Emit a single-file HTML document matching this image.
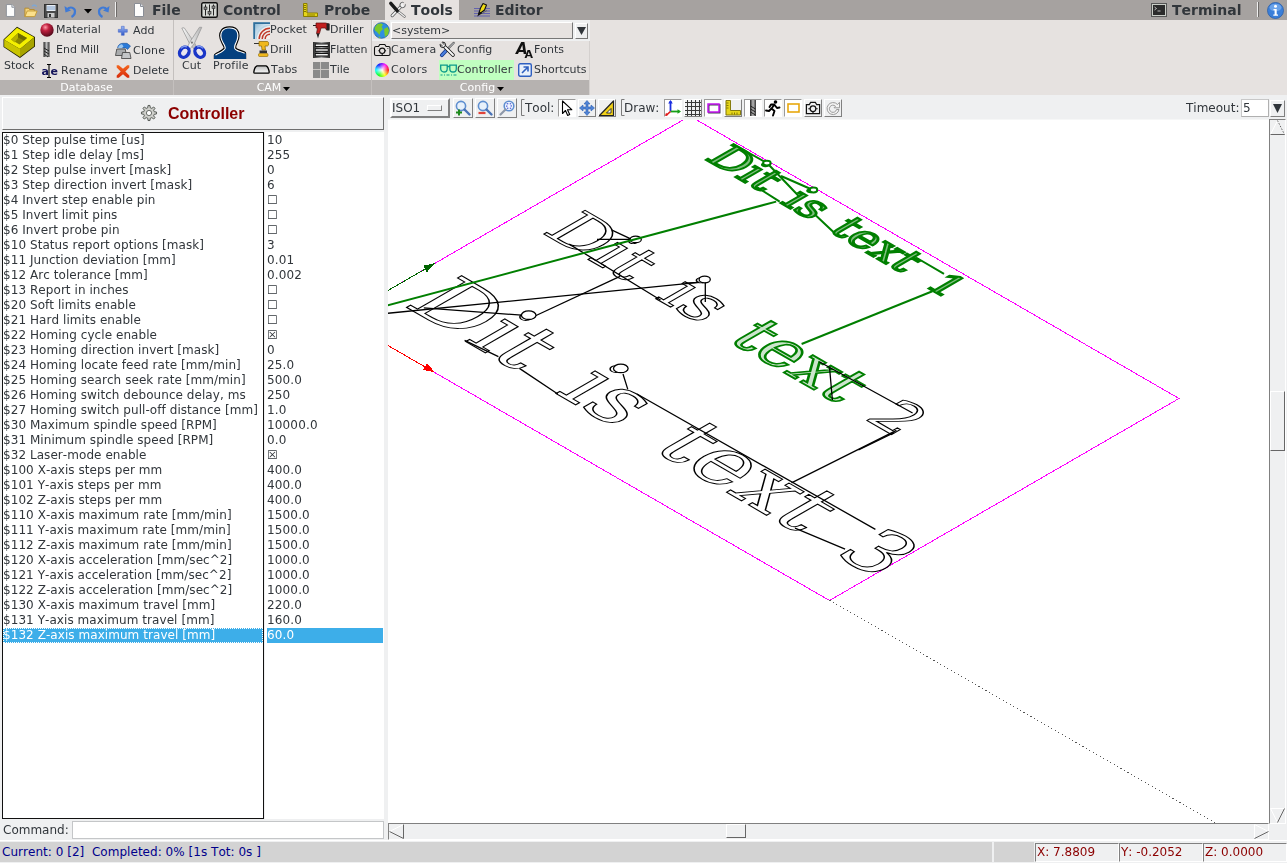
<!DOCTYPE html>
<html>
<head>
<meta charset="utf-8">
<title>bCNC</title>
<style>
html,body{margin:0;padding:0;}
body{filter:brightness(1);width:1287px;height:863px;overflow:hidden;background:#eff0f1;position:relative;
 font-family:"DejaVu Sans","Liberation Sans",sans-serif;font-size:12px;color:#31363b;font-kerning:none;}
.abs{position:absolute;}
#tabbar{position:absolute;left:0;top:0;width:1287px;height:20px;}
#ribbon{position:absolute;left:0;top:20px;width:1287px;height:75px;}
.tab{position:absolute;top:0;height:20px;font-weight:bold;font-size:14px;line-height:20px;color:#31363b;white-space:nowrap;}
.tab.active{background:#e6e2e0;}
.glbg{position:absolute;top:60px;height:15px;background:#b6b2b0;opacity:.999}
.glabel{position:absolute;top:60px;height:15px;color:#fff;font-size:11px;line-height:16px;text-align:center;white-space:nowrap;}
.rb{position:absolute;font-size:11px;line-height:13px;white-space:nowrap;color:#31363b;}
.sep{position:absolute;top:0;width:1px;height:75px;background:#d9d6d3;}
.row{position:absolute;left:0;height:15px;line-height:15px;white-space:nowrap;letter-spacing:.06px;margin-top:1px}
.row.v{letter-spacing:.15px}
.t12{font-size:12px;white-space:nowrap;position:absolute;}
svg{position:absolute;overflow:visible;}
.gl{display:inline-block}
</style>
</head>
<body>
<div class="abs" style="left:0;top:0;width:1287px;height:20px;opacity:.999;background:#a6a2a0"></div>
<div class="abs" style="left:0;top:20px;width:1287px;height:75px;opacity:.999;background:#e6e2e0"></div>
<!-- TABBAR -->
<div id="tabbar">
<!-- quick icons -->
<svg style="left:5px;top:3px" width="11" height="15" viewBox="0 0 12 16"><path d="M1.5 1.5h6l3 3v10h-9z" fill="#fdfdfd" stroke="#8a8e96" stroke-width="1"/><path d="M7.5 1.5v3h3" fill="#dfe3ea" stroke="#8a8e96" stroke-width="1"/></svg>
<svg style="left:23px;top:3px" width="16" height="15" viewBox="0 0 16 16"><path d="M1.5 14.5v-9h4l1 1.5h5v2" fill="#f3d27a" stroke="#b58a2a"/><path d="M1.5 14.5l2.5-6h10.5l-2.5 6z" fill="#fbe08c" stroke="#c39a35"/><path d="M9 3.5c2-2 4-1.5 5 0.5" fill="none" stroke="#7aa7d8" stroke-width="1.2"/></svg>
<svg style="left:44px;top:4px" width="14" height="14" viewBox="0 0 14 14"><rect x="0.5" y="0.5" width="13" height="13" fill="#4a4a4a" stroke="#333"/><rect x="2.5" y="1" width="9" height="6" fill="#e9eef5"/><path d="M3 3h8M3 5h8" stroke="#7f9fc8" stroke-width="1"/><rect x="3.5" y="9" width="7" height="4.5" fill="#c9c9c9"/><rect x="5" y="10" width="2" height="3" fill="#333"/></svg>
<svg style="left:64px;top:4px" width="13" height="14" viewBox="0 0 13 14"><path d="M3 5.5c3-3.5 8-2 8 2 0 2.5-1.5 4.5-3.5 5.5" fill="none" stroke="#3f7ad6" stroke-width="2.2"/><path d="M0.5 2l1 6.5 5.5-2z" fill="#3f7ad6"/></svg>
<svg style="left:84px;top:9px" width="8" height="5" viewBox="0 0 8 5"><path d="M0 0h8l-4 4.5z" fill="#000"/></svg>
<svg style="left:97px;top:4px" width="13" height="14" viewBox="0 0 13 14"><path d="M10 5.5c-3-3.5-8-2-8 2 0 2.5 1.5 4.5 3.5 5.5" fill="none" stroke="#3f7ad6" stroke-width="2.2"/><path d="M12.500 2l-1 6.500-5.500-2z" fill="#3f7ad6"/></svg>
<div class="abs" style="left:115px;top:2px;width:1px;height:15px;background:#efefef"></div>
<div class="abs" style="left:116px;top:2px;width:1px;height:15px;background:#6e6b69"></div>
<!-- File -->
<svg style="left:133px;top:3px" width="12" height="14" viewBox="0 0 12 14"><path d="M1.500 0.500h6l3 3v10h-9z" fill="#fdfdfd" stroke="#8a8e96"/><path d="M7.500 0.500v3h3" fill="#dfe3ea" stroke="#8a8e96"/></svg>
<div class="tab" style="left:152px">File</div>
<!-- Control -->
<svg style="left:201px;top:2px" width="17" height="16" viewBox="0 0 17 16"><rect x="0.7" y="0.7" width="15.600" height="14.600" rx="1.500" fill="#d8dad6" stroke="#111" stroke-width="1.400"/><path d="M4.500 2.500v11M8.500 2.500v11M12.500 2.500v11" stroke="#222" stroke-width="1"/><rect x="3" y="5" width="3" height="2.500" fill="#888" stroke="#222" stroke-width=".6"/><rect x="7" y="9.500" width="3" height="2.500" fill="#888" stroke="#222" stroke-width=".6"/><rect x="11" y="4" width="3" height="2.500" fill="#888" stroke="#222" stroke-width=".6"/></svg>
<div class="tab" style="left:223px">Control</div>
<!-- Probe -->
<svg style="left:303px;top:3px" width="15" height="14" viewBox="0 0 15 14"><path d="M0.500 0.500h3.500v9.500h10.500v3.500h-14z" fill="#e6d619" stroke="#8a7d00"/><path d="M1 2.500h2M1 4.500h2M1 6.500h2M1 8.500h2M5 11v2M7 11v2M9 11v2M11 11v2" stroke="#6b6000" stroke-width=".8"/></svg>
<div class="tab" style="left:324px">Probe</div>
<!-- Tools (active) -->
<div class="tab active" style="left:385px;width:74px"></div>
<svg style="left:389px;top:2px" width="18" height="16" viewBox="0 0 18 16"><path d="M13 3.500L3.200 13.600" stroke="#555" stroke-width="3.200" stroke-linecap="round"/><path d="M13 3.500L3.200 13.600" stroke="#f4f4f4" stroke-width="1.700" stroke-linecap="round"/><circle cx="13.600" cy="3" r="2.700" fill="#f4f4f4" stroke="#555" stroke-width=".9"/><path d="M14 2.600L17.500 -0.500" stroke="#e6e2e0" stroke-width="2.300"/><path d="M8.500 9L15.500 14.500" stroke="#666" stroke-width="2.400" stroke-linecap="round"/><path d="M8.500 9L15.500 14.500" stroke="#f2f2f2" stroke-width="1.100" stroke-linecap="round"/><path d="M1.800 1.300L8.300 8.800" stroke="#1a1a1a" stroke-width="3.400" stroke-linecap="round"/></svg>
<div class="tab" style="left:411px">Tools</div>
<!-- Editor -->
<svg style="left:474px;top:2px" width="17" height="16" viewBox="0 0 17 16"><path d="M0 6.500h16M0 9h16M0 11.500h16M0 14h16" stroke="#5a5ab0" stroke-width=".9"/><path d="M4.500 12.500L6.500 6 9 1.500 12.500 3 10.500 8z" fill="#f0dc14" stroke="#111" stroke-width="1.100" stroke-linejoin="round"/><path d="M3.200 14.500L5.200 9.500 8.500 11z" fill="#111"/><path d="M8 11.500l5-3" stroke="#666" stroke-width="1"/></svg>
<div class="tab" style="left:495px">Editor</div>
<!-- Terminal -->
<svg style="left:1151px;top:3px" width="16" height="14" viewBox="0 0 16 14"><rect x="0.500" y="0.500" width="15" height="13" fill="#c9cdc6" stroke="#555"/><rect x="2" y="2" width="12" height="10" fill="#2b2b2b"/><path d="M3.500 4l2 1.500-2 1.500M6.500 8h3" stroke="#ddd" stroke-width=".8" fill="none"/></svg>
<div class="tab" style="left:1172px">Terminal</div>
<div class="abs" style="left:1257px;top:2px;width:1px;height:15px;background:#efefef"></div>
<div class="abs" style="left:1258px;top:2px;width:1px;height:15px;background:#6e6b69"></div>
<svg style="left:1267px;top:2px" width="17" height="17" viewBox="0 0 17 17"><circle cx="8.500" cy="8.500" r="8" fill="#3b7fd9" stroke="#2a5ea8" stroke-width=".8"/><ellipse cx="8.500" cy="5.500" rx="6" ry="3.800" fill="#7fb0ee" opacity=".7"/><circle cx="8.500" cy="4.300" r="1.500" fill="#fff"/><path d="M6.500 7h3.200v5.500h1.300v1.200h-4.700v-1.200h1.300v-4.300h-1.100z" fill="#fff"/></svg>
</div>
<!-- RIBBON -->
<div id="ribbon">
<div class="glbg" style="left:0;width:173px"></div><div class="glabel" style="left:0;width:173px"><span class="gl">Database</span></div>
<div class="glbg" style="left:174px;width:197px"></div><div class="glabel" style="left:174px;width:197px"><span class="gl">CAM</span><svg style="position:relative;left:2px;top:0px" width="7" height="4" viewBox="0 0 7 4"><path d="M0 0h7l-3.500 4z" fill="#000"/></svg></div>
<div class="glbg" style="left:372px;width:218px"></div><div class="glabel" style="left:372px;width:218px"><span class="gl">Config</span><svg style="position:relative;left:2px;top:0px" width="7" height="4" viewBox="0 0 7 4"><path d="M0 0h7l-3.500 4z" fill="#000"/></svg></div>
<div class="abs" style="left:173px;top:0;width:1px;height:75px;background:#c4c0be"></div>
<div class="abs" style="left:371px;top:0;width:1px;height:75px;background:#c4c0be"></div>
<div class="abs" style="left:589px;top:0;width:1px;height:75px;background:#d4d0ce"></div>
<svg style="left:3px;top:6px" width="33" height="33" viewBox="0 0 33 33"><path d="M0.500 13.500L14 0.800 32 11v9.500L17 32 0.500 21z" fill="#1a1a00"/><path d="M1.200 13.800L14 1.800 31.200 11.300 17 23z" fill="#f4f000"/><path d="M1.200 13.800L17 23v8L1.200 20.700z" fill="#c9c400"/><path d="M17 23l14.200-11.700v9L17 31z" fill="#a8a400"/><path d="M8 13.500l7-6.500 9 5-7.500 6.500z" fill="#8c8800"/><path d="M15 7l9 5-3 2.600-6-3.200z" fill="#6d6a00"/><path d="M15 7v5l-3.500 4.500L8 13.500z" fill="#b5b000"/></svg>
<div class="rb" style="left:4px;top:39px;">Stock</div>
<svg style="left:40px;top:3px" width="14" height="14" viewBox="0 0 14 14"><defs><radialGradient id="gm" cx=".38" cy=".3" r=".75"><stop offset="0" stop-color="#ff9aa8"/><stop offset=".35" stop-color="#c0203f"/><stop offset="1" stop-color="#4a0818"/></radialGradient></defs><circle cx="7" cy="7" r="6.700" fill="url(#gm)"/></svg>
<div class="rb" style="left:56px;top:3px;">Material</div>
<svg style="left:43px;top:22px" width="7" height="15" viewBox="0 0 7 15"><defs><linearGradient id="ge" x1="0" x2="1"><stop offset="0" stop-color="#222"/><stop offset=".5" stop-color="#bbb"/><stop offset="1" stop-color="#333"/></linearGradient></defs><rect x="0.500" y="0" width="6" height="15" fill="url(#ge)"/><path d="M1 6l5 3M1 9l5 3M1 12l4 3" stroke="#222" stroke-width="1"/></svg>
<div class="rb" style="left:56px;top:23px;">End Mill</div>
<svg style="left:41px;top:43px" width="18" height="16" viewBox="0 0 18 16"><text x="0.500" y="12" font-family="DejaVu Sans" font-weight="bold" font-size="11" fill="#14145a">a</text><text x="9.500" y="12" font-family="DejaVu Sans" font-weight="bold" font-size="11" fill="#14145a">e</text><path d="M6 1.500h4M6 14.500h4M8 1.500v13" stroke="#000" stroke-width="1.100"/></svg>
<div class="rb" style="left:61px;top:44px;letter-spacing:0.18px">Rename</div>
<svg style="left:118px;top:6px" width="10" height="10" viewBox="0 0 10 10"><defs><linearGradient id="ga" x1="0" y1="0" x2="0" y2="1"><stop offset="0" stop-color="#9db8f4"/><stop offset="1" stop-color="#2f57c8"/></linearGradient></defs><path d="M3.400 0.300h2.800v3.100h3.100v2.800h-3.100v3.100h-2.800v-3.100h-3.100v-2.800h3.100z" fill="url(#ga)" stroke="#3a5fc4" stroke-width=".5"/></svg>
<div class="rb" style="left:133px;top:4px;">Add</div>
<svg style="left:115px;top:23px" width="17" height="16" viewBox="0 0 17 16"><path d="M2.500 4.500C3.500 1.500 5.500 0.300 8 0.300h4l3.500 2.700-3 3.500-1.500-1.500H7z" fill="#2a7ad8" stroke="#1d4f96" stroke-width=".6"/><path d="M3 4.500c.8-2 2.200-3 4-3.200l1.500 2.200-2.500 2.500z" fill="#9cc6ee"/><path d="M1.800 6h8.400l1.300 6.500H0.500z" fill="#a9abad" stroke="#3c3c3c" stroke-width=".8"/><path d="M7.500 9.500h7.300l1.200 6H6.500z" fill="#c4c6c8" stroke="#3c3c3c" stroke-width=".8"/></svg>
<div class="rb" style="left:133px;top:24px;letter-spacing:0.2px">Clone</div>
<svg style="left:116px;top:45px" width="14" height="13" viewBox="0 0 14 13"><defs><linearGradient id="gd" x1="0" y1="0" x2="0" y2="1"><stop offset="0" stop-color="#f4661e"/><stop offset="1" stop-color="#d82a0a"/></linearGradient></defs><path d="M2.800 0.300L7 3.800 11.200 0.300 13.300 0.300 13.300 2.600 9.300 6.500 13.300 10.400 13.300 12.700 11.200 12.700 7 9.200 2.800 12.700 0.700 12.700 0.700 10.400 4.700 6.500 0.700 2.600 0.700 0.300z" fill="url(#gd)"/></svg>
<div class="rb" style="left:133px;top:44px;">Delete</div>
<svg style="left:178px;top:7px" width="28" height="32" viewBox="0 0 28 32"><defs><linearGradient id="gs1" x1="0" x2="1"><stop offset="0" stop-color="#fafafa"/><stop offset="1" stop-color="#b4b4b4"/></linearGradient></defs><path d="M3.800 1L6.200 0.800 16.400 15.500 19 21 16.500 22.500 11.500 16.500z" fill="url(#gs1)" stroke="#9a9a9a" stroke-width=".8"/><path d="M23.800 0.300L21.400 0.300 11.600 15.500 9 21 11.500 22.500 16.400 16.500z" fill="url(#gs1)" stroke="#9a9a9a" stroke-width=".8"/><circle cx="13.900" cy="15.600" r="1.100" fill="#777"/><ellipse cx="6.300" cy="25.200" rx="4.300" ry="5.400" fill="none" stroke="#1a36c8" stroke-width="3.500" transform="rotate(38 6.300 25.200)"/><ellipse cx="21.700" cy="25.200" rx="4.300" ry="5.400" fill="none" stroke="#1a36c8" stroke-width="3.500" transform="rotate(-38 21.700 25.200)"/><ellipse cx="6.300" cy="25.200" rx="2.400" ry="3.600" fill="#e9e6f0" transform="rotate(38 6.300 25.200)"/><ellipse cx="21.700" cy="25.200" rx="2.400" ry="3.600" fill="#e9e6f0" transform="rotate(-38 21.700 25.200)"/><path d="M3 21.500c1.500-2 4-2.500 6-1.500M19 20c2-1 4.500-.5 6 1.500" fill="none" stroke="#7f9cf0" stroke-width="1.200"/></svg>
<div class="rb" style="left:182px;top:39px;">Cut</div>
<svg style="left:213px;top:6px;overflow:hidden" width="34" height="33" viewBox="0 0 34 33"><path d="M3 34V29.500C6 27.500 10.500 26 12.500 23C13.500 21 11.500 18.500 10.500 16.500C8.500 13 7.500 8.500 9.500 5.500C11 3 14 2.500 16.600 2.500C19.500 2.500 22.500 3.300 23.600 6C25 9 24 13.500 22.500 16.500C21.500 18.500 20.500 21 21.500 23C23 25.500 28 26 31 27.500V34" fill="none" stroke="#000" stroke-width="4.400" stroke-linejoin="round"/><path d="M3 34V29.500C6 27.500 10.500 26 12.500 23C13.500 21 11.500 18.500 10.500 16.500C8.500 13 7.500 8.500 9.500 5.500C11 3 14 2.500 16.600 2.500C19.500 2.500 22.500 3.300 23.600 6C25 9 24 13.500 22.500 16.500C21.500 18.500 20.500 21 21.500 23C23 25.500 28 26 31 27.500V34" fill="none" stroke="#fff" stroke-width="2.200" stroke-linejoin="round"/><path d="M1 34V28.500L3 29.500V34zM33 34V27l-2 .5V34z" fill="#04407f"/><path d="M3 34V29.500C6 27.500 10.500 26 12.500 23C13.500 21 11.500 18.500 10.500 16.500C8.500 13 7.500 8.500 9.500 5.500C11 3 14 2.500 16.600 2.500C19.500 2.500 22.500 3.300 23.600 6C25 9 24 13.500 22.500 16.500C21.500 18.500 20.500 21 21.500 23C23 25.500 28 26 31 27.500V34Z" fill="#04407f"/></svg>
<div class="rb" style="left:213px;top:39px;letter-spacing:0.16px">Profile</div>
<svg style="left:253px;top:2px" width="17" height="17" viewBox="0 0 17 17"><defs><linearGradient id="gp" x1="0" y1="0" x2="1" y2="1"><stop offset="0" stop-color="#7fb0d0"/><stop offset=".6" stop-color="#eef4f8"/></linearGradient></defs><rect x="0.500" y="0.500" width="16.500" height="16.500" fill="url(#gp)"/><path d="M1.200 17V1.200H17" fill="none" stroke="#2f6f9c" stroke-width="1.800"/><path d="M3.200 17C3.200 9.400 9.400 3.200 17 3.200" fill="none" stroke="#b8d4e6" stroke-width="1.400"/><path d="M4.500 17C4.500 10 10 4.500 17 4.500V17z" fill="#f1eeec"/><path d="M6.200 17c0-5.900 4.800-10.700 10.800-10.700M9.200 17c0-4.300 3.500-7.800 7.800-7.800M12.200 17c0-2.700 2.100-4.800 4.800-4.800" fill="none" stroke="#c03a2a" stroke-width="1.500"/></svg>
<div class="rb" style="left:270px;top:3px;">Pocket</div>
<svg style="left:254px;top:21px" width="16" height="16" viewBox="0 0 16 16"><path d="M0 2.500h5" stroke="#333" stroke-width="1"/><path d="M5 0.500h8.500c1.500 0 1.500 4.500 0 4.500H11l.5 4h-3.500L7.500 5H5z" fill="#f0b81c" stroke="#8a6400" stroke-width=".7"/><rect x="5.500" y="9.500" width="7.500" height="2.500" fill="#333"/><rect x="4.500" y="12.500" width="9.500" height="3" rx="1" fill="#f0b81c" stroke="#8a6400" stroke-width=".6"/></svg>
<div class="rb" style="left:270px;top:23px;">Drill</div>
<svg style="left:253px;top:45px" width="17" height="9" viewBox="0 0 17 9"><defs><linearGradient id="gt" x1="0" y1="0" x2="0" y2="1"><stop offset="0" stop-color="#bdbdbd"/><stop offset="1" stop-color="#f8f8f8"/></linearGradient></defs><path d="M0.800 7.200C1.200 4 2 1.600 4 0.800h9c2 .8 2.800 3.200 3.200 6.400 0 .8-.4 1-1 1h-13.400c-.6 0-1-.2-1-1z" fill="url(#gt)" stroke="#000" stroke-width="1.300"/></svg>
<div class="rb" style="left:271px;top:43px;">Tabs</div>
<svg style="left:313px;top:2px" width="17" height="17" viewBox="0 0 17 17"><path d="M0 3.500h3" stroke="#222" stroke-width="1"/><path d="M3 1h9.500l3.500 1v5.500h-3L12.500 6H8l-1.500 5.500h-3L4.500 6H3z" fill="#c3201f" stroke="#5a0b0b" stroke-width=".7"/><rect x="13.500" y="1.500" width="3" height="7" fill="#222"/><path d="M3.500 11.500h3L5 16.500z" fill="#222"/></svg>
<div class="rb" style="left:330px;top:3px;">Driller</div>
<svg style="left:313px;top:22px" width="17" height="16" viewBox="0 0 17 16"><defs><linearGradient id="gf" x1="0" x2="1"><stop offset="0" stop-color="#2a2a2a"/><stop offset=".5" stop-color="#a8a8a8"/><stop offset="1" stop-color="#2a2a2a"/></linearGradient></defs><rect x="0" y="0" width="17" height="16" fill="url(#gf)"/><path d="M2 3.300h13.500M2 8h13.500M2 12.700h13.500" stroke="#111" stroke-width="3.400"/><path d="M2.800 3.300h12M2.800 8h12M2.800 12.700h12" stroke="#f0f0f0" stroke-width="1.500"/></svg>
<div class="rb" style="left:330px;top:23px;letter-spacing:-0.18px">Flatten</div>
<svg style="left:313px;top:42px" width="16" height="16" viewBox="0 0 16 16"><rect width="16" height="16" fill="#8a8a8a"/><path d="M7.500 0v16M0 7.500h16" stroke="#c9c6c3" stroke-width="1"/></svg>
<div class="rb" style="left:330px;top:43px;">Tile</div>
<div class="abs" style="opacity:.999;left:372px;top:0;width:218px;height:21px;background:#eff0f1"></div>
<div class="abs" style="left:373px;top:1px;width:17px;height:18px;background:#e6e2e0"></div>
<svg style="left:373px;top:2px" width="17" height="17" viewBox="0 0 17 17"><circle cx="8.500" cy="8.500" r="7.800" fill="#2f8fe0" stroke="#1e5fa8" stroke-width=".8"/><path d="M4 2.500c2-1.500 5-1.500 6 0L8.500 5l1.500 2-2.500 2.500-1 3.500-2.500-3L2 8.500 1.500 6z" fill="#7bc92b"/><path d="M11 7l3.500-2 1.500 3.500-1 4-3 2.500-.5-3.500z" fill="#7bc92b"/><path d="M5 14l3 1.800-1.500.5z" fill="#7bc92b"/></svg>
<div class="abs" style="opacity:.999;left:391px;top:2px;width:182px;height:17px;background:#e6e2e0;border-top:1px solid #fff;border-left:1px solid #fff;border-bottom:1px solid #777;border-right:1px solid #777;box-sizing:border-box"></div>
<div class="rb" style="left:392px;top:4px;">&lt;system&gt;</div>
<div class="abs" style="left:575px;top:3px;width:13px;height:16px;background:#eff0f1;border-top:1px solid #fff;border-left:1px solid #fff;border-bottom:1px solid #777;border-right:1px solid #777;box-sizing:border-box"></div>
<svg style="left:577px;top:7px" width="9" height="8" viewBox="0 0 9 8"><path d="M0 0h9l-4.500 8z" fill="#31363b"/></svg>
<svg style="left:374px;top:23px" width="17" height="14" viewBox="0 0 17 14"><path d="M2 3.500h2.500l1.300-2h5l1.300 2H14.500q1.500 0 1.500 1.500v6q0 1.500-1.500 1.500H2q-1.500 0-1.500-1.500v-6q0-1.500 1.500-1.500z" fill="none" stroke="#111" stroke-width="1.100"/><circle cx="8.200" cy="7.800" r="2.700" fill="none" stroke="#111" stroke-width="1.100"/><path d="M5.500 7.800h-1.200M10.900 7.800h1.200M8.200 10.500v2M13.500 5.500h.8" stroke="#111" stroke-width="1.100"/></svg>
<div class="rb" style="left:391px;top:23px;letter-spacing:0.4px">Camera</div>
<svg style="left:439px;top:21px" width="17" height="17" viewBox="0 0 17 17"><path d="M14.800 1.800L8 8.600" stroke="#5a5a5a" stroke-width="2.200" stroke-linecap="round"/><path d="M14.800 1.800L8 8.600" stroke="#cfd4da" stroke-width="1" stroke-linecap="round"/><path d="M7.600 9L2.800 14.200" stroke="#173a8a" stroke-width="3.800" stroke-linecap="round"/><path d="M7.600 9L2.800 14.200" stroke="#4a7fe0" stroke-width="2" stroke-linecap="round"/><path d="M4.500 4.500L14 14" stroke="#111" stroke-width="3.600" stroke-linecap="round"/><path d="M4.500 4.500L14 14" stroke="#fafafa" stroke-width="1.900" stroke-linecap="round"/><circle cx="3.800" cy="3.800" r="2.700" fill="#fafafa" stroke="#111" stroke-width="1"/><path d="M0.500 0.500L4 4" stroke="#e6e2e0" stroke-width="2.200"/><path d="M1.600 3.400L3.800 5.200M3.400 1.600L5.200 3.800" stroke="#111" stroke-width=".8"/></svg>
<div class="rb" style="left:457px;top:23px;">Config</div>
<svg style="left:516px;top:21px" width="18" height="18" viewBox="0 0 18 18"><text x="0" y="13" font-family="DejaVu Sans" font-weight="bold" font-style="italic" font-size="15" fill="#111">A</text><text x="8.500" y="16.500" font-family="DejaVu Sans" font-weight="bold" font-size="11" fill="#111">A</text></svg>
<div class="rb" style="left:534px;top:23px;">Fonts</div>
<div class="abs" style="left:375px;top:43px;width:14px;height:14px;border-radius:50%;background:radial-gradient(circle,#fff 0%,rgba(255,255,255,0) 70%),conic-gradient(from 90deg,#f00,#ff0,#0f0,#0ff,#00f,#f0f,#f00)"></div>
<div class="rb" style="left:391px;top:43px;letter-spacing:0.36px">Colors</div>
<div class="abs" style="opacity:.999;left:439px;top:40px;width:75px;height:20px;background:#c0ffc0"></div>
<svg style="left:440px;top:44px" width="17" height="12" viewBox="0 0 17 12"><path d="M0.700 1.200h6.500v3.500c0 2-1.500 3.300-3.200 3.300S0.700 6.700 0.700 4.700zM9.800 1.200h6.500v3.500c0 2-1.500 3.300-3.200 3.300s-3.300-1.300-3.300-3.300zM7.200 2.500h2.600" fill="none" stroke="#0a9a8a" stroke-width="1.300"/><path d="M0.500 11h2M4 11h1M6.500 11h3M11 11h1M13.500 11h3" stroke="#0a9a8a" stroke-width="1"/></svg>
<div class="rb" style="left:457px;top:43px;letter-spacing:0.1px">Controller</div>
<svg style="left:518px;top:43px" width="14" height="14" viewBox="0 0 14 14"><rect x="0.700" y="0.700" width="12.600" height="12.600" rx="1.500" fill="#e9f0fb" stroke="#2f5fc0" stroke-width="1.400"/><path d="M4 10L9.500 4.500M5.500 4h4.500v4.500" fill="none" stroke="#2f5fc0" stroke-width="1.600"/></svg>
<div class="rb" style="left:534px;top:43px;">Shortcuts</div>
</div>
<!-- LEFT PANEL -->
<div id="left">
<div class="abs" style="left:2px;top:97px;width:382px;height:33px;box-sizing:border-box;background:#eff0f1;border-top:1px solid #fff;border-left:1px solid #fff;border-bottom:1px solid #6e6e6e;border-right:1px solid #6e6e6e"></div>
<svg style="left:141px;top:105px" width="16" height="16" viewBox="0 0 16 16"><path d="M6.74 2.75L7.05 0.46L8.95 0.46L9.26 2.75L10.82 3.40L12.66 1.99L14.01 3.34L12.60 5.18L13.25 6.74L15.54 7.05L15.54 8.95L13.25 9.26L12.60 10.82L14.01 12.66L12.66 14.01L10.82 12.60L9.26 13.25L8.95 15.54L7.05 15.54L6.74 13.25L5.18 12.60L3.34 14.01L1.99 12.66L3.40 10.82L2.75 9.26L0.46 8.95L0.46 7.05L2.75 6.74L3.40 5.18L1.99 3.34L3.34 1.99L5.18 3.40Z" fill="#cfd0cc" stroke="#555a55" stroke-width="1"/><circle cx="8" cy="8" r="2.600" fill="#fff" stroke="#6a6e6a" stroke-width="1"/></svg>
<div class="abs" style="left:168px;top:105px;font-family:'Liberation Sans',sans-serif;font-weight:bold;font-size:16px;line-height:18px;color:#8b0000;white-space:nowrap">Controller</div>
<div class="abs" style="left:2px;top:132px;width:262px;height:687px;box-sizing:border-box;background:#fff;border:1px solid #111"></div>
<div class="abs" style="left:265px;top:132px;width:119px;height:687px;background:#fff"></div>
<div class="row" style="left:3px;top:132px;">$0 Step pulse time [us]</div><div class="row v" style="left:267px;top:132px;">10</div>
<div class="row" style="left:3px;top:147px;">$1 Step idle delay [ms]</div><div class="row v" style="left:267px;top:147px;">255</div>
<div class="row" style="left:3px;top:162px;">$2 Step pulse invert [mask]</div><div class="row v" style="left:267px;top:162px;">0</div>
<div class="row" style="left:3px;top:177px;">$3 Step direction invert [mask]</div><div class="row v" style="left:267px;top:177px;">6</div>
<div class="row" style="left:3px;top:192px;">$4 Invert step enable pin</div><div class="row v" style="left:267px;top:192px;">☐</div>
<div class="row" style="left:3px;top:207px;">$5 Invert limit pins</div><div class="row v" style="left:267px;top:207px;">☐</div>
<div class="row" style="left:3px;top:222px;">$6 Invert probe pin</div><div class="row v" style="left:267px;top:222px;">☐</div>
<div class="row" style="left:3px;top:237px;">$10 Status report options [mask]</div><div class="row v" style="left:267px;top:237px;">3</div>
<div class="row" style="left:3px;top:252px;">$11 Junction deviation [mm]</div><div class="row v" style="left:267px;top:252px;">0.01</div>
<div class="row" style="left:3px;top:267px;">$12 Arc tolerance [mm]</div><div class="row v" style="left:267px;top:267px;">0.002</div>
<div class="row" style="left:3px;top:282px;">$13 Report in inches</div><div class="row v" style="left:267px;top:282px;">☐</div>
<div class="row" style="left:3px;top:297px;">$20 Soft limits enable</div><div class="row v" style="left:267px;top:297px;">☐</div>
<div class="row" style="left:3px;top:312px;">$21 Hard limits enable</div><div class="row v" style="left:267px;top:312px;">☐</div>
<div class="row" style="left:3px;top:327px;">$22 Homing cycle enable</div><div class="row v" style="left:267px;top:327px;">☒</div>
<div class="row" style="left:3px;top:342px;">$23 Homing direction invert [mask]</div><div class="row v" style="left:267px;top:342px;">0</div>
<div class="row" style="left:3px;top:357px;">$24 Homing locate feed rate [mm/min]</div><div class="row v" style="left:267px;top:357px;">25.0</div>
<div class="row" style="left:3px;top:372px;">$25 Homing search seek rate [mm/min]</div><div class="row v" style="left:267px;top:372px;">500.0</div>
<div class="row" style="left:3px;top:387px;">$26 Homing switch debounce delay, ms</div><div class="row v" style="left:267px;top:387px;">250</div>
<div class="row" style="left:3px;top:402px;">$27 Homing switch pull-off distance [mm]</div><div class="row v" style="left:267px;top:402px;">1.0</div>
<div class="row" style="left:3px;top:417px;">$30 Maximum spindle speed [RPM]</div><div class="row v" style="left:267px;top:417px;">10000.0</div>
<div class="row" style="left:3px;top:432px;">$31 Minimum spindle speed [RPM]</div><div class="row v" style="left:267px;top:432px;">0.0</div>
<div class="row" style="left:3px;top:447px;">$32 Laser-mode enable</div><div class="row v" style="left:267px;top:447px;">☒</div>
<div class="row" style="left:3px;top:462px;">$100 X-axis steps per mm</div><div class="row v" style="left:267px;top:462px;">400.0</div>
<div class="row" style="left:3px;top:477px;">$101 Y-axis steps per mm</div><div class="row v" style="left:267px;top:477px;">400.0</div>
<div class="row" style="left:3px;top:492px;">$102 Z-axis steps per mm</div><div class="row v" style="left:267px;top:492px;">400.0</div>
<div class="row" style="left:3px;top:507px;">$110 X-axis maximum rate [mm/min]</div><div class="row v" style="left:267px;top:507px;">1500.0</div>
<div class="row" style="left:3px;top:522px;">$111 Y-axis maximum rate [mm/min]</div><div class="row v" style="left:267px;top:522px;">1500.0</div>
<div class="row" style="left:3px;top:537px;">$112 Z-axis maximum rate [mm/min]</div><div class="row v" style="left:267px;top:537px;">1500.0</div>
<div class="row" style="left:3px;top:552px;">$120 X-axis acceleration [mm/sec^2]</div><div class="row v" style="left:267px;top:552px;">1000.0</div>
<div class="row" style="left:3px;top:567px;">$121 Y-axis acceleration [mm/sec^2]</div><div class="row v" style="left:267px;top:567px;">1000.0</div>
<div class="row" style="left:3px;top:582px;">$122 Z-axis acceleration [mm/sec^2]</div><div class="row v" style="left:267px;top:582px;">1000.0</div>
<div class="row" style="left:3px;top:597px;">$130 X-axis maximum travel [mm]</div><div class="row v" style="left:267px;top:597px;">220.0</div>
<div class="row" style="left:3px;top:612px;">$131 Y-axis maximum travel [mm]</div><div class="row v" style="left:267px;top:612px;">160.0</div>
<div class="abs" style="left:3px;top:628px;width:260px;height:15px;background:#3daee9;box-sizing:border-box;border:1px dotted #fff"></div>
<div class="abs" style="left:267px;top:628px;width:116px;height:15px;background:#3daee9"></div>
<div class="row" style="left:3px;top:627px;color:#fff;">$132 Z-axis maximum travel [mm]</div><div class="row v" style="left:267px;top:627px;color:#fff;">60.0</div>
<div class="t12" style="left:3px;top:823px;line-height:15px">Command:</div>
<div class="abs" style="left:72px;top:821px;width:312px;height:18px;box-sizing:border-box;background:#fff;border:1px solid #c4c6c8"></div>
</div>
<!-- TOOLBAR -->
<div id="toolbar">
<div class="abs" style="left:390px;top:98px;width:60px;height:20px;box-sizing:border-box;background:#eff0f1;border-top:2px solid #fff;border-left:2px solid #fff;border-bottom:2px solid #808080;border-right:2px solid #808080"></div>
<div class="t12" style="left:392px;top:101px;line-height:15px">ISO1</div>
<div class="abs" style="left:427px;top:105px;width:15px;height:6px;box-sizing:border-box;background:#eff0f1;border-top:1px solid #fff;border-left:1px solid #fff;border-bottom:1px solid #808080;border-right:1px solid #808080"></div>
<div class="abs" style="left:453px;top:98px;width:20px;height:20px;box-sizing:border-box;background:#eff0f1;border-top:1px solid #fff;border-left:1px solid #fff;border-bottom:1px solid #808080;border-right:1px solid #808080"></div>
<div class="abs" style="left:475px;top:98px;width:20px;height:20px;box-sizing:border-box;background:#eff0f1;border-top:1px solid #fff;border-left:1px solid #fff;border-bottom:1px solid #808080;border-right:1px solid #808080"></div>
<div class="abs" style="left:497px;top:98px;width:20px;height:20px;box-sizing:border-box;background:#eff0f1;border-top:1px solid #fff;border-left:1px solid #fff;border-bottom:1px solid #808080;border-right:1px solid #808080"></div>
<svg style="left:455px;top:100px" width="16" height="16" viewBox="0 0 16 16"><circle cx="6" cy="6" r="4.600" fill="#e8f1fb" stroke="#5f8fd0" stroke-width="1.600"/><path d="M9.500 9.500l5 5" stroke="#4a74b8" stroke-width="2.400" stroke-linecap="round"/><path d="M1 12.500h6M4 9.500v6" stroke="#1d8a1d" stroke-width="2"/></svg>
<svg style="left:477px;top:100px" width="16" height="16" viewBox="0 0 16 16"><circle cx="6" cy="6" r="4.600" fill="#e8f1fb" stroke="#5f8fd0" stroke-width="1.600"/><path d="M9.500 9.500l5 5" stroke="#4a74b8" stroke-width="2.400" stroke-linecap="round"/><path d="M1.500 13h7" stroke="#e0443a" stroke-width="2.200"/></svg>
<svg style="left:499px;top:100px" width="16" height="16" viewBox="0 0 16 16"><circle cx="10" cy="6" r="4.800" fill="#f4f8ff" stroke="#5f8fd0" stroke-width="1.600"/><path d="M6.500 9.500l-5 5" stroke="#8d97a8" stroke-width="2.200" stroke-linecap="round"/><rect x="7.800" y="3.800" width="4.400" height="4.400" fill="none" stroke="#2b3fd0" stroke-width="1" stroke-dasharray="1.500 1.400"/></svg>
<svg style="left:521px;top:99px" width="4" height="17" viewBox="0 0 4 17"><path d="M3.500 0.500h-3v16h3" fill="none" stroke="#7a7a7a" stroke-width="1"/></svg>
<div class="t12" style="left:525px;top:101px;line-height:15px">Tool:</div>
<div class="abs" style="left:558px;top:99px;width:18px;height:18px;box-sizing:border-box;background:#fff;border-top:1px solid #9a9a9a;border-left:1px solid #9a9a9a;border-bottom:1px solid #fff;border-right:1px solid #fff"></div>
<div class="abs" style="left:578px;top:99px;width:18px;height:18px;box-sizing:border-box;background:#eff0f1;border-top:1px solid #fff;border-left:1px solid #fff;border-bottom:1px solid #808080;border-right:1px solid #808080"></div>
<div class="abs" style="left:598px;top:99px;width:18px;height:18px;box-sizing:border-box;background:#eff0f1;border-top:1px solid #fff;border-left:1px solid #fff;border-bottom:1px solid #808080;border-right:1px solid #808080"></div>
<svg style="left:560px;top:100px" width="14" height="17" viewBox="0 0 14 17"><path d="M2.500 1v12.500l3-3 2.200 5 2-1-2.200-4.800h4.300z" fill="#fff" stroke="#000" stroke-width="1.100" stroke-linejoin="round"/></svg>
<svg style="left:579px;top:100px" width="16" height="16" viewBox="0 0 16 16"><path d="M8 0.500l3 3.500h-2v3h3v-2l3.500 3-3.500 3v-2h-3v3h2l-3 3.500-3-3.500h2v-3h-3v2l-3.500-3 3.500-3v2h3v-3h-2z" fill="#4f83d6" stroke="#2d5fb0" stroke-width=".6"/></svg>
<svg style="left:599px;top:100px" width="16" height="16" viewBox="0 0 16 16"><path d="M14.500 1v14.500h-14z" fill="#f2d21a" stroke="#222" stroke-width="1.200" stroke-linejoin="round"/><path d="M12 8.500v4.500h-4.500z" fill="#fff" stroke="#222" stroke-width=".9"/></svg>
<svg style="left:621px;top:99px" width="4" height="17" viewBox="0 0 4 17"><path d="M3.500 0.500h-3v16h3" fill="none" stroke="#7a7a7a" stroke-width="1"/></svg>
<div class="t12" style="left:624px;top:101px;line-height:15px">Draw:</div>
<div class="abs" style="left:664px;top:99px;width:18px;height:18px;box-sizing:border-box;background:#fff;border-top:1px solid #9a9a9a;border-left:1px solid #9a9a9a;border-bottom:1px solid #fff;border-right:1px solid #fff"></div>
<div class="abs" style="left:684px;top:99px;width:18px;height:18px;box-sizing:border-box;background:#eff0f1;border-top:1px solid #fff;border-left:1px solid #fff;border-bottom:1px solid #808080;border-right:1px solid #808080"></div>
<div class="abs" style="left:704px;top:99px;width:18px;height:18px;box-sizing:border-box;background:#fff;border-top:1px solid #9a9a9a;border-left:1px solid #9a9a9a;border-bottom:1px solid #fff;border-right:1px solid #fff"></div>
<div class="abs" style="left:724px;top:99px;width:18px;height:18px;box-sizing:border-box;background:#eff0f1;border-top:1px solid #fff;border-left:1px solid #fff;border-bottom:1px solid #808080;border-right:1px solid #808080"></div>
<div class="abs" style="left:744px;top:99px;width:18px;height:18px;box-sizing:border-box;background:#fff;border-top:1px solid #9a9a9a;border-left:1px solid #9a9a9a;border-bottom:1px solid #fff;border-right:1px solid #fff"></div>
<div class="abs" style="left:764px;top:99px;width:18px;height:18px;box-sizing:border-box;background:#fff;border-top:1px solid #9a9a9a;border-left:1px solid #9a9a9a;border-bottom:1px solid #fff;border-right:1px solid #fff"></div>
<div class="abs" style="left:784px;top:99px;width:18px;height:18px;box-sizing:border-box;background:#fff;border-top:1px solid #9a9a9a;border-left:1px solid #9a9a9a;border-bottom:1px solid #fff;border-right:1px solid #fff"></div>
<div class="abs" style="left:804px;top:99px;width:18px;height:18px;box-sizing:border-box;background:#eff0f1;border-top:1px solid #fff;border-left:1px solid #fff;border-bottom:1px solid #808080;border-right:1px solid #808080"></div>
<div class="abs" style="left:824px;top:99px;width:18px;height:18px;box-sizing:border-box;background:#eff0f1;border-top:1px solid #fff;border-left:1px solid #fff;border-bottom:1px solid #808080;border-right:1px solid #808080"></div>
<svg style="left:665px;top:100px" width="16" height="16" viewBox="0 0 16 16"><path d="M5.500 11.500V1" stroke="#1a2fe0" stroke-width="1.800"/><path d="M5.500 0l-2.300 3.500h4.600z" fill="#1a2fe0"/><path d="M5.500 11.500h9" stroke="#17a017" stroke-width="1.800"/><path d="M16 11.500l-3.500-2.300v4.600z" fill="#17a017"/><path d="M5.500 11.500l-4.500 4" stroke="#e01a1a" stroke-width="1.600"/><path d="M0 16l1-3.200 2.200 2.200z" fill="#e01a1a"/></svg>
<svg style="left:685px;top:100px" width="16" height="16" viewBox="0 0 16 16"><path d="M2.500 0v16M6.500 0v16M10.500 0v16M14.500 0v16M0 2.500h16M0 6.500h16M0 10.500h16M0 14.500h16" stroke="#3a3a3a" stroke-width="1"/></svg>
<svg style="left:705px;top:100px" width="16" height="16" viewBox="0 0 16 16"><rect x="3.800" y="4.800" width="11" height="8" fill="none" stroke="#2a2a3a" stroke-width="1.300"/><rect x="3" y="4" width="11" height="8" fill="none" stroke="#c414f0" stroke-width="1.500"/></svg>
<svg style="left:725px;top:100px" width="16" height="16" viewBox="0 0 16 16"><path d="M1 0.500h4.500v10h10v4.500h-14.500z" fill="#e6d619" stroke="#7a7000" stroke-width=".9"/><path d="M1.500 3h2M1.500 5.500h2M1.500 8h2M7 12.500v2M9.500 12.500v2M12 12.500v2" stroke="#6b6000" stroke-width=".8"/></svg>
<svg style="left:745px;top:100px" width="16" height="16" viewBox="0 0 16 16"><rect x="5" y="0" width="6" height="16" fill="url(#ge)"/><path d="M5.500 6l5 3M5.500 9l5 3M5.500 12l5 3" stroke="#222" stroke-width="1"/></svg>
<svg style="left:765px;top:100px" width="16" height="16" viewBox="0 0 16 16"><circle cx="10.500" cy="2" r="1.800" fill="#000"/><path d="M9.500 4.500l-3 4 3 2.500-1.500 4.500M6.500 8.500l-2.500 2.500-3-.5M9.500 4.500l-3.500 0-1.500 2.500M10 5.500l2 2.500 2.500-.5" fill="none" stroke="#000" stroke-width="1.900" stroke-linecap="round" stroke-linejoin="round"/></svg>
<svg style="left:785px;top:100px" width="16" height="16" viewBox="0 0 16 16"><rect x="3" y="4" width="11" height="8" fill="none" stroke="#e8a80e" stroke-width="1.600"/></svg>
<svg style="left:805px;top:101px" width="16" height="14" viewBox="0 0 17 14"><path d="M1.500 3.500h3l1.500-2.500h5l1.500 2.500h3v9.500h-14z" fill="none" stroke="#111" stroke-width="1.300"/><circle cx="8.500" cy="7.800" r="3" fill="none" stroke="#111" stroke-width="1.300"/><path d="M5.500 7.800h-2M11.500 7.800h2M8.500 10.800v2" stroke="#111" stroke-width="1.200"/></svg>
<svg style="left:825px;top:100px" width="16" height="16" viewBox="0 0 16 16"><path d="M12.500 4.500A6 6 0 1 0 14 9.500h-2.500A3.600 3.600 0 1 1 10.500 6.200L9 7.800h5.500V2.300z" fill="#f4f4f4" stroke="#9a9a9a" stroke-width="1"/></svg>
<div class="t12" style="left:1186px;top:101px;line-height:15px">Timeout:</div>
<div class="abs" style="opacity:.999;left:1241px;top:99px;width:28px;height:18px;box-sizing:border-box;background:#fff;border-top:1px solid #c8c8c8;border-left:1px solid #c8c8c8;border-bottom:1px solid #b0b0b0;border-right:1px solid #b0b0b0"></div>
<div class="t12" style="left:1243px;top:101px;line-height:15px">5</div>
<div class="abs" style="left:1270px;top:100px;width:15px;height:17px;box-sizing:border-box;background:#eff0f1;border-top:1px solid #fff;border-left:1px solid #fff;border-bottom:1px solid #808080;border-right:1px solid #808080"></div>
<svg style="left:1273px;top:104px" width="9" height="9" viewBox="0 0 9 9"><path d="M0 0h9l-4.500 9z" fill="#31363b"/></svg>
</div>
<!-- CANVAS -->
<div class="abs" style="left:388px;top:119px;width:881px;height:704px;background:#f6f7f7"></div>
<div id="canvas" class="abs" style="left:388px;top:120px;width:881px;height:703px;background:#fff;overflow:hidden;">
<svg style="left:0;top:0" width="882" height="703" viewBox="388 120 882 703">
<g shape-rendering="crispEdges" fill="none">
<path d="M340.3 318L689.8 116L1179 398.500L829.500 600.500Z" stroke="#ff00ff" stroke-width="1"/>
<path d="M829.500 600.500L1217 824" stroke="#555" stroke-width="1" stroke-dasharray="1 3"/>
<path d="M340.3 318L433 264.500" stroke="#006400" stroke-width="1"/><path d="M433.500 264L424 266L427 271.500Z" fill="#006400" stroke="#006400"/>
<path d="M340.3 318L433 371.500" stroke="#ff0000" stroke-width="1"/><path d="M433.500 371.500L424 369.500L427 364Z" fill="#ff0000" stroke="#ff0000"/>
</g>
<g fill="none" stroke="#000" stroke-width="1.3">
<path d="M340.3 318L699 282.300"/>
<path d="M705.300 279.500V302"/>
<path d="M535 316L620 276.300"/>
<path d="M423.800 307.800L521.700 315.200"/>
<path d="M791.500 482.800L896.400 430.300"/>
</g>
<g transform="matrix(0.8660,0.5000,-0.8660,0.5000,405.2,306.6)" font-family="'DejaVu Serif','Liberation Serif',serif" font-size="87" fill="none">
<text x="-3" y="0" stroke="#000" stroke-width="1.3" vector-effect="non-scaling-stroke">Dit</text>
<text x="171" y="0" stroke="#000" stroke-width="1.3" vector-effect="non-scaling-stroke">is</text>
<text x="283" y="0" stroke="#000" stroke-width="1.3" vector-effect="non-scaling-stroke">text</text>
<text x="494" y="0" font-size="80" stroke="#000" stroke-width="1.3" vector-effect="non-scaling-stroke">3</text>
</g>
<g transform="matrix(0.6495,0.3750,-0.6495,0.3750,542.7,233.3)" font-family="'DejaVu Serif','Liberation Serif',serif" font-size="87" fill="none">
<text x="-3" y="0" stroke="#000" stroke-width="1.3" vector-effect="non-scaling-stroke">Dit</text>
<text x="171" y="0" stroke="#000" stroke-width="1.3" vector-effect="non-scaling-stroke">is</text>
<text x="283" y="0" fill="#007f00" fill-opacity=".2" stroke="#007f00" stroke-width="2.2" vector-effect="non-scaling-stroke">text</text>
<text x="494" y="0" font-size="80" stroke="#000" stroke-width="1.3" vector-effect="non-scaling-stroke">2</text>
</g>
<g transform="matrix(0.4330,0.2500,-0.4330,0.2500,705.2,159.6)" font-family="'DejaVu Serif','Liberation Serif',serif" font-size="87" fill="none">
<text x="-3" y="0" fill="#007f00" fill-opacity=".5" stroke="#007f00" stroke-width="2.4" vector-effect="non-scaling-stroke">Dit</text>
<text x="171" y="0" fill="#007f00" fill-opacity=".5" stroke="#007f00" stroke-width="2.4" vector-effect="non-scaling-stroke">is</text>
<text x="283" y="0" fill="#007f00" fill-opacity=".5" stroke="#007f00" stroke-width="2.4" vector-effect="non-scaling-stroke">text</text>
<text x="505" y="0" font-size="80" fill="#007f00" fill-opacity=".5" stroke="#007f00" stroke-width="2.4" vector-effect="non-scaling-stroke">1</text>
</g>
<g fill="none" stroke="#000" stroke-width="1.3">
<path d="M464.600 340.400L498.400 356.700M519.400 368.400L557.800 394M623 374L627.800 389.400M637 394L875.400 529.400M795 528.200L845.100 549.200"/>
<ellipse cx="528.700" cy="315.200" rx="7.300" ry="4.300" fill="#fff"/><ellipse cx="620.800" cy="368.400" rx="7.300" ry="4.300" fill="#fff"/>
<path d="M612 230.100L630.700 238.900M597 239.400L630 239.400M569.200 244.100L660.500 300M684.800 283.200L698.800 282.300M819.300 361.800L912.600 413M829.600 368.300L832.400 400M894 432.700L858.500 450"/>
<ellipse cx="635.700" cy="239.400" rx="5.600" ry="3.300" fill="#fff"/><ellipse cx="704.700" cy="279.500" rx="5.600" ry="3.300" fill="#fff"/>
</g>
<g fill="none" stroke="#007f00" stroke-width="2">
<path d="M340.300 318L776.200 201.600"/>
<path d="M932.400 291.300L801.600 344"/>
<path d="M757.600 187.600L779.700 201.600M769 165L799.600 197M815.900 215.600L833.400 231.900M916 257.500L944 273.800M733 144L767 163M781 176L813 190"/>
<ellipse cx="766.900" cy="163.100" rx="3.800" ry="2.400" fill="#fff"/><ellipse cx="813.500" cy="190" rx="3.800" ry="2.400" fill="#fff"/>
</g>
</svg>
</div>
<!-- SCROLLBARS -->
<div id="scroll">
<div class="abs" style="left:1269px;top:119px;width:17px;height:705px;box-sizing:border-box;background:#eff0f1;border-left:1px solid #808080;border-top:1px solid #808080;border-right:1px solid #fff;border-bottom:1px solid #fff"></div>
<svg style="left:1270px;top:120px" width="15" height="16" viewBox="0 0 15 16"><path d="M0.500 14.500L7.500 0.500" stroke="#fff" stroke-width="1"/><path d="M7.500 0.500L14.500 14.500" stroke="#666" stroke-width="1" stroke-dasharray="1.500 1.500"/><path d="M0.500 14.500h14" stroke="#666" stroke-width="1"/></svg>
<div class="abs" style="left:1270px;top:391px;width:15px;height:60px;box-sizing:border-box;background:#eff0f1;border-top:1px solid #fff;border-left:1px solid #fff;border-bottom:1px solid #666;border-right:1px solid #666"></div>
<svg style="left:1270px;top:807px" width="15" height="16" viewBox="0 0 15 16"><path d="M0.500 1.500h14" stroke="#fff" stroke-width="1"/><path d="M0.500 1.500L7.500 15.500" stroke="#fff" stroke-width="1"/><path d="M14.500 1.500L7.500 15.500" stroke="#666" stroke-width="1"/></svg>
<div class="abs" style="left:388px;top:823px;width:881px;height:17px;box-sizing:border-box;background:#eff0f1;border-left:1px solid #808080;border-top:1px solid #808080;border-bottom:1px solid #fff;border-right:1px solid #fff"></div>
<svg style="left:389px;top:824px" width="16" height="15" viewBox="0 0 16 15"><path d="M14.500 0.500L0.500 7.500" stroke="#fff" stroke-width="1"/><path d="M0.500 7.500L14.500 14.500" stroke="#666" stroke-width="1"/><path d="M14.500 0.500v14" stroke="#666" stroke-width="1"/></svg>
<div class="abs" style="left:726px;top:824px;width:20px;height:14px;box-sizing:border-box;background:#eff0f1;border-top:1px solid #fff;border-left:1px solid #fff;border-bottom:1px solid #666;border-right:1px solid #666"></div>
<svg style="left:1253px;top:824px" width="16" height="15" viewBox="0 0 16 15"><path d="M1.500 0.500v14" stroke="#fff" stroke-width="1"/><path d="M1.500 0.500L15.500 7.500" stroke="#fff" stroke-width="1"/><path d="M15.500 7.500L1.500 14.500" stroke="#666" stroke-width="1"/></svg>
</div>
<!-- STATUS -->
<div id="status">
<div class="abs" style="left:0;top:840px;width:1287px;height:1px;background:#fff"></div>
<div class="abs" style="left:0px;top:842px;width:992px;height:20px;background:#d3d3d3"></div>
<div class="t12" style="left:2px;top:845px;line-height:15px;color:#00008b;white-space:pre;letter-spacing:.03px">Current: 0 [2]  Completed: 0% [1s Tot: 0s ]</div>
<div class="abs" style="left:994px;top:842px;width:40px;height:20px;background:#d3d3d3"></div>
<div class="abs" style="opacity:.999;left:1035px;top:843px;width:84px;height:19px;box-sizing:border-box;background:#eff0f1;border-top:1px solid #808080;border-left:1px solid #808080;border-bottom:1px solid #fff;border-right:1px solid #fff"></div>
<div class="t12" style="left:1037px;top:845px;line-height:15px;color:#8b0000">X: 7.8809</div>
<div class="abs" style="opacity:.999;left:1119px;top:843px;width:84px;height:19px;box-sizing:border-box;background:#eff0f1;border-top:1px solid #808080;border-left:1px solid #808080;border-bottom:1px solid #fff;border-right:1px solid #fff"></div>
<div class="t12" style="left:1121px;top:845px;line-height:15px;color:#8b0000">Y: -0.2052</div>
<div class="abs" style="opacity:.999;left:1203px;top:843px;width:84px;height:19px;box-sizing:border-box;background:#eff0f1;border-top:1px solid #808080;border-left:1px solid #808080;border-bottom:1px solid #fff;border-right:1px solid #fff"></div>
<div class="t12" style="left:1205px;top:845px;line-height:15px;color:#8b0000">Z: 0.0000</div>
</div>
</body>
</html>
